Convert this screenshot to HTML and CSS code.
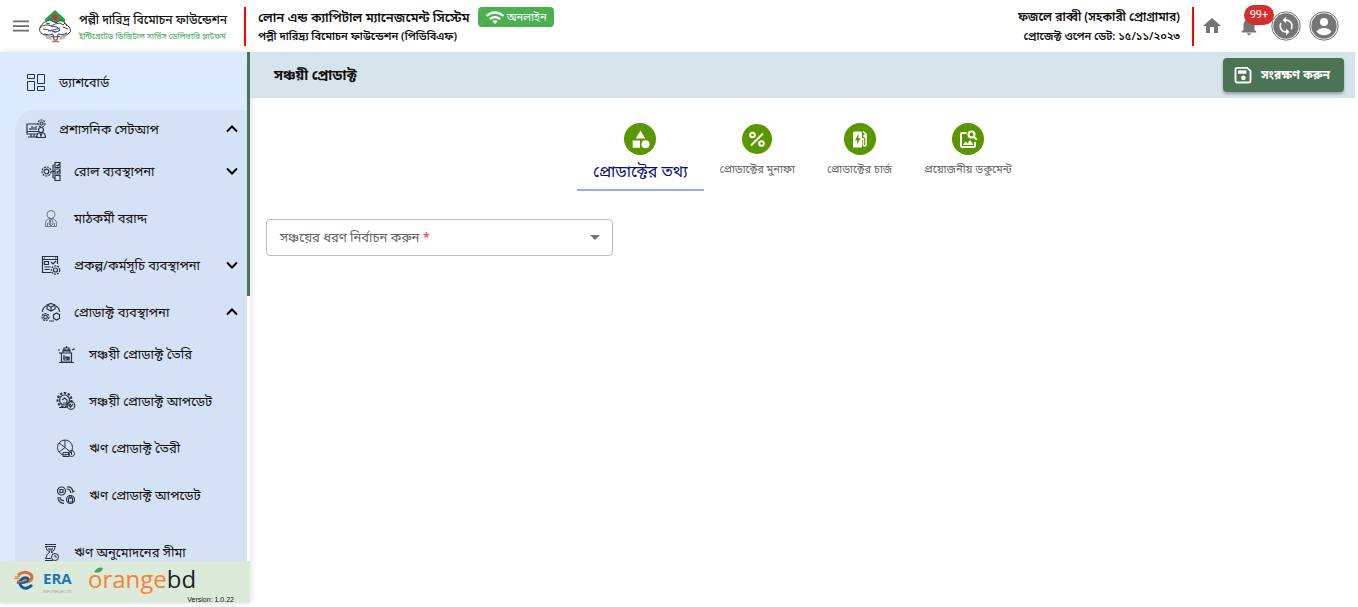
FILE: index.html
```html
<!DOCTYPE html>
<html lang="bn">
<head>
<meta charset="utf-8">
<meta name="viewport" content="width=device-width, initial-scale=1">
<title>সঞ্চয়ী প্রোডাক্ট</title>
<link rel="stylesheet" href="styles.css">
</head>
<body>
<header class="topbar">
  <div class="brand">
    <button class="plain" aria-label="মেনু"><svg width="24" height="24" viewBox="0 0 24 24" fill="#6b6b6b"><path d="M4 17.500h16v-1.700H4zm0-4.600h16v-1.700H4zM4 6.500v1.700h16V6.500z"/></svg></button>
    <svg class="crest" width="34" height="34" viewBox="0 0 34 34">
      <path d="M17 1 7 10v5h20v-5z" fill="#1ea24c"/>
      <circle cx="17" cy="8" r="2.800" fill="#e0262e"/>
      <path d="M9 12q3-2 5 0l4 2q4-4 8-1l6 6q2 4-2 6-5 3-13 3-8 0-13-3-4-3-2-7 3-5 7-6z" fill="#fff" stroke="#444"/>
      <g fill="none" stroke="#444">
        <path d="M2 19q5-5 11-2l6 1 3 3M13 17q5-3 9-3M22 14l3 2 2-2 2 3M5 20q5 0 8 2M25 18l5 2M8 14l4 1"/>
        <path d="M6 25q6 2 9 0l1 6h3l1-6q4 2 9-1"/>
      </g>
      <path d="M6 26q4 1 7 1l1 4-5-1zM29 26q-4 1-7 1l-1 4 5-1z" fill="#bbb"/>
      <path d="M10 22q6-1 12-3M13 21q4 4 9 0" stroke="#4650b8" stroke-width="1.200" fill="none"/>
      <path d="M14 32.500h7" stroke="#ef5a5a" stroke-width="1.500"/>
    </svg>
    <div class="brand-text">
      <strong class="brand-name">পল্লী দারিদ্র বিমোচন ফাউন্ডেশন</strong>
      <span class="brand-sub">ইন্টিগ্রেটেড ডিজিটাল সার্ভিস ডেলিভারি প্লাটফর্ম</span>
    </div>
  </div>
  <div class="system">
    <div class="system-row"><h1 class="system-name">লোন এন্ড ক্যাপিটাল ম্যানেজমেন্ট সিস্টেম</h1>
      <span class="online"><svg width="20" height="15" viewBox="0 0 20 15" fill="none" stroke="#fff" stroke-width="2.200"><path d="M1.500 6q8.500-7 17 0M4.800 9.200q5.200-4.200 10.400 0"/><path d="m10 14-2.500-2.800q2.500-1.900 5 0z" fill="#fff" stroke="none"/></svg>অনলাইন</span></div>
    <p class="org">পল্লী দারিদ্র্য বিমোচন ফাউন্ডেশন (পিডিবিএফ)</p>
  </div>
  <div class="user">
    <strong class="user-name">ফজলে রাব্বী (সহকারী প্রোগ্রামার)</strong>
    <span class="org">প্রোজেক্ট ওপেন ডেট: ১৫/১১/২০২৩</span>
  </div>
  <div class="tools">
    <button class="plain" aria-label="হোম"><svg width="20" height="22" viewBox="0 0 20 22" fill="#757575"><path d="M8 18v-6h4v6h4v-7h3l-9-8-9 8h3v7z"/></svg></button>
    <button class="plain bell" aria-label="নোটিফিকেশন"><svg width="22" height="22" viewBox="0 0 24 24" fill="#757575"><path d="M12 22c1.100 0 2-.900 2-2h-4c0 1.100.900 2 2 2zm6-6v-5c0-3.070-1.630-5.640-4.500-6.320V4c0-.830-.670-1.500-1.500-1.500s-1.500.670-1.500 1.500v.680C7.640 5.360 6 7.920 6 11v5l-2 2v1h16v-1z"/></svg><span class="count">99+</span></button>
    <button class="plain ring" aria-label="সিঙ্ক"><svg width="30" height="30" viewBox="0 0 30 30"><circle cx="15" cy="15" r="14.200" fill="#fff" stroke="#757575"/><circle cx="15" cy="15" r="12.700" fill="#757575"/><g transform="translate(5 5) scale(.84)" fill="#fff"><path d="M12 4V1L8 5l4 4V6c3.310 0 6 2.690 6 6 0 1.010-.250 1.970-.700 2.800l1.460 1.460C19.540 15.030 20 13.570 20 12c0-4.420-3.580-8-8-8zm0 14c-3.310 0-6-2.690-6-6 0-1.010.250-1.970.700-2.800L5.240 7.740C4.460 8.970 4 10.430 4 12c0 4.420 3.580 8 8 8v3l4-4-4-4z"/></g></svg></button>
    <button class="plain" aria-label="প্রোফাইল"><svg width="30" height="30" viewBox="0 0 30 30"><circle cx="15" cy="15" r="14.200" fill="#fff" stroke="#757575"/><circle cx="15" cy="15" r="12.700" fill="#757575"/><circle cx="15" cy="11" r="4" fill="#fff"/><path d="M7.500 20.500q2.500-3.500 7.500-3.500t7.500 3.500q-2.500 3.700-7.500 3.700t-7.500-3.700z" fill="#fff"/></svg></button>
  </div>
</header>
<div class="shell">
  <aside class="sidebar">
    <div class="scroll">
      <nav class="menu">
        <a class="item" href="#"><svg class="ico" viewBox="0 0 20 20"><path d="M1.500 2.500h7v4h-7zM1.500 9.500h7v9h-7zM11.500 2.500h7v9h-7zM11.500 14.500h7v4h-7z"/></svg>ড্যাশবোর্ড</a>
        <div class="group">
          <button class="item"><svg class="ico dense" viewBox="0 0 20 20"><path d="M12 5H1v10h11M1 12.500h11M5 15v3M8 15v3M2 18h10M4 11V9M6 11V7M8 11V8M10 11V7"/><circle cx="15.500" cy="4.500" r="3.500" stroke-dasharray="2 1"/><circle cx="15.500" cy="4.500" r="1.500"/><circle cx="15" cy="11" r="2.500"/><path d="M10.500 18.500q0-5 4.500-5t4.500 5zM14 14l1 3 1-3"/></svg>প্রশাসনিক সেটআপ<svg class="caret" viewBox="0 0 12 8"><path d="m1 6.500 5-5 5 5"/></svg></button>
          <div class="sub">
            <button class="item"><svg class="ico dense" viewBox="0 0 20 20"><circle cx="5.500" cy="10.500" r="4.500" stroke-dasharray="2 1"/><circle cx="5.500" cy="10.500" r="2.300"/><path d="M10 10.500h4M12 4v13M12 4h2M12 17h2M14 1.500h5v5h-5zM14 8h5v5h-5zM14 14.500h5v5h-5zM15.500 4l1 1 2-2M15.500 10.500l1 1 2-2"/></svg>রোল ব্যবস্থাপনা<svg class="caret" viewBox="0 0 12 8"><path d="m1 1.500 5 5 5-5"/></svg></button>
            <a class="item" href="#"><svg class="ico soft" viewBox="0 0 20 20"><circle cx="10" cy="6.500" r="4"/><path d="M4.500 18.500q-1-7 4-8h3q5 1 4 8zM9 11h2l1 5-2 2-2-2zM6.500 15v3M13.500 15v3M9.500 12v5"/></svg>মাঠকর্মী বরাদ্দ</a>
            <button class="item"><svg class="ico dense" viewBox="0 0 20 20"><path d="M10 17.500H1.500v-16h15V9M1.500 4.500h15M3.500 6.500h4v3h-4zM10 7l2 2 3-3M3.500 12h6M3.500 14.500h5M3 3h1M14 3h1"/><circle cx="14.500" cy="15" r="4.200" stroke-dasharray="2 1"/><circle cx="14.500" cy="15" r="2"/></svg>প্রকল্প/কর্মসূচি ব্যবস্থাপনা<svg class="caret" viewBox="0 0 12 8"><path d="m1 1.500 5 5 5-5"/></svg></button>
            <button class="item"><svg class="ico dense" viewBox="0 0 20 20"><path d="m10 1.500 4 1.500v4l-4 2-4-2V3zM6 3l4 2 4-2M10 5v4M5 4Q1.500 6 1.500 10M15 4q3.500 2 3.500 6M8 19h5"/><circle cx="4.500" cy="15" r="3.500" stroke-dasharray="2 1"/><circle cx="4.500" cy="15" r="1.800"/><path d="m15.500 11 3 1.700v3.600l-3 1.700-3-1.700v-3.600z"/></svg>প্রোডাক্ট ব্যবস্থাপনা<svg class="caret" viewBox="0 0 12 8"><path d="m1 6.500 5-5 5 5"/></svg></button>
            <div class="sub nested">
              <a class="item" href="#"><svg class="ico dense" viewBox="0 0 20 20"><path d="M5.500 9h10v9h-10zM7 9V6h7v3M8 6V4h5v2M10.500 2v2M3 18.500h15M2 6h2M17 5h2M4 8v2M16 6l2-1M8 11v5h5v-3h-3l2 3M7 14h7M7 7h7"/></svg>সঞ্চয়ী প্রোডাক্ট তৈরি</a>
              <a class="item" href="#"><svg class="ico dense" viewBox="0 0 20 20"><circle cx="8.500" cy="9" r="7" stroke-dasharray="2.500 1.500" stroke-width="2"/><circle cx="8.500" cy="9" r="5"/><path d="m6 9 2.500-2L11 9v3H7M3 16.500h7"/><circle cx="15" cy="14.500" r="3.800"/><path d="m13 14.500 1.500 1.500 2.500-3"/></svg>সঞ্চয়ী প্রোডাক্ট আপডেট</a>
              <a class="item" href="#"><svg class="ico" viewBox="0 0 20 20"><circle cx="9" cy="9.500" r="7.500"/><path d="M9 2v7.500L3 14M9 9.500 3 5M9 9.500l6 5M7 14.500h6v4H7zM9 16.500h2"/><circle cx="15.500" cy="15.500" r="3"/><path d="M15.500 14v3"/></svg>ঋণ প্রোডাক্ট তৈরী</a>
              <a class="item" href="#"><svg class="ico dense" viewBox="0 0 20 20"><circle cx="5.500" cy="6" r="4"/><path d="M4 4.500h3v3H4zM11 2q5-1 6 5l1.500-1M11 4q3 0 4 4M2 12q0 6 6 6.500M4 12q0 3 4 4"/><circle cx="14.500" cy="14.500" r="4"/><path d="M12.500 13h4v4h-4zM13 11l1.500 2 1.500-2"/></svg>ঋণ প্রোডাক্ট আপডেট</a>
            </div>
            <a class="item" href="#"><svg class="ico" viewBox="0 0 20 20"><path d="M4 2.500h11M4 4.500h11M5 5q0 4 4 5-4 2-4 6M14 5q0 4-4 5l2 1M4 16.500h6M4 18.500h8M7 7h5M8 8h3"/><circle cx="14" cy="15" r="3.500"/><path d="M14 13v2h2"/></svg>ঋণ অনুমোদনের সীমা</a>
          </div>
        </div>
      </nav>
      <div class="track"><div class="thumb"></div></div>
    </div>
    <footer class="vendors">
      <svg class="era-mark" width="22" height="22" viewBox="0 0 22 22" fill="none"><path d="M4 6q6-4 10-2 4 1 4 5-1 3-5 4" stroke="#e9693b" stroke-width="3"/><path d="M3 13q10 2 11-3-1-2-4-1-5 2-4 6 2 5 7 4 3-1 5-3" stroke="#165b9c" stroke-width="3"/><path d="M3 12.500q7 1 10-2" stroke="#e9693b" stroke-width="1.600"/><path d="M1 7.500h5M0 9.500h5" stroke="#ef8d55" stroke-width="1.300"/></svg>
      <div class="era"><b>ERA</b><small>INFOTECH LTD</small></div>
      <div class="orange"><span>orange</span>bd<svg class="leaf" width="11" height="7" viewBox="0 0 11 7"><path d="M1 5Q5-1 10 1 8 7 1 5z" fill="#43a35b"/></svg></div>
      <span class="version">Version: 1.0.22</span>
    </footer>
  </aside>
  <main class="main">
    <div class="titlebar">
      <h2 class="title">সঞ্চয়ী প্রোডাক্ট</h2>
      <button class="save"><svg width="20" height="20" viewBox="0 0 24 24" fill="none" stroke="#fff" stroke-width="2.200"><path d="M5 3.500h12L21 7v12q0 2-2 2H5q-2 0-2-2V5.500q0-2 2-2z"/><path d="M6 8.500h10" stroke-width="4"/><circle cx="12.500" cy="15.500" r="2.800" fill="#fff" stroke="none"/></svg>সংরক্ষণ করুন</button>
    </div>
    <div class="tabs" role="tablist">
      <button class="tab active" role="tab" aria-selected="true"><svg width="32" height="32" viewBox="0 0 32 32"><circle cx="16" cy="16" r="16" fill="#5a9600"/><g fill="#fff"><path d="m16.500 7.500 4.800 8h-9.600zM8.700 17.500h7.300v7.300H8.700z"/><circle cx="21.500" cy="21.200" r="4"/></g></svg>প্রোডাক্টের তথ্য</button>
      <button class="tab" role="tab"><svg width="32" height="32" viewBox="0 0 32 32"><circle cx="16" cy="16" r="15" fill="#5a9600"/><g fill="none" stroke="#fff" stroke-width="2"><circle cx="11.500" cy="12" r="2.300"/><circle cx="20.500" cy="20.500" r="2.300"/><path d="m10 22.500 12-12"/></g></svg>প্রোডাক্টের মুনাফা</button>
      <button class="tab" role="tab"><svg width="32" height="32" viewBox="0 0 32 32"><circle cx="16" cy="16" r="16" fill="#5a9600"/><path d="M9 10q0-1.500 1.500-1.500h6Q18 8.500 18 10v14.500H9z" fill="#fff"/><path d="M14.500 11 11 17.500h2.200v4l3.300-6.500h-2z" fill="#5a9600"/><path d="m19 8.500 3 2.500v10.500q0 1.500-1.300 1.500t-1.300-1.500V16H18" fill="none" stroke="#fff" stroke-width="1.500"/><circle cx="21" cy="13" r="1.800" fill="#fff"/></svg>প্রোডাক্টের চার্জ</button>
      <button class="tab" role="tab"><svg width="32" height="32" viewBox="0 0 32 32"><circle cx="16" cy="16" r="16" fill="#5a9600"/><path d="M14.500 10H10q-1 0-1 1v12q0 1 1 1h12q1 0 1-1v-4" fill="none" stroke="#fff" stroke-width="2"/><path d="m11 22 2.500-3.500 2 2 2.500-3.500 3.500 5z" fill="#fff"/><g fill="none" stroke="#fff" stroke-width="2"><circle cx="19.500" cy="11.500" r="3"/><path d="m21.800 13.800 3 3"/></g></svg>প্রয়োজনীয় ডকুমেন্ট</button>
    </div>
    <form class="form">
      <div class="field">
        <label class="label" for="type">সঞ্চয়ের ধরণ নির্বাচন করুন <span class="req">*</span></label>
        <select class="select" id="type"><option value=""></option></select>
        <svg class="drop" width="10" height="5" viewBox="0 0 10 5"><path d="M0 0h10L5 5z" fill="#757575"/></svg>
      </div>
    </form>
  </main>
</div>
</body>
</html>
```
FILE: styles.css
```css
* { box-sizing: border-box; }
body { margin: 0; padding: 0 3px 4px 0; height: 100vh; display: flex; flex-direction: column; background: #fff; color: #111; font-family: "Noto Sans", "Noto Sans Bengali", sans-serif; font-size: 13px; line-height: 20px; overflow: hidden; }
h1, h2, p { margin: 0; }
button { font: inherit; color: inherit; background: none; border: 0; padding: 0; cursor: pointer; }
a { color: inherit; text-decoration: none; }
svg { display: block; flex: none; }

.topbar { flex: none; height: 52px; display: flex; align-items: center; white-space: nowrap; }
.brand { width: 246px; height: 39px; display: flex; align-items: center; padding-left: 9px; border-right: 2px solid #f00; }
.crest { margin: 0 7px 0 5px; }
.brand-text { display: flex; flex-direction: column; }
.brand-name { font-size: 12px; line-height: 18px; font-weight: 500; }
.brand-sub { font-size: 8px; line-height: 13px; color: #3aa655; }
.system { padding-left: 12px; flex: 1; }
.system-row { display: flex; align-items: center; gap: 8px; height: 20px; }
.system-name { font-size: 13px; line-height: 20px; font-weight: 600; }
.online { display: flex; align-items: center; gap: 2px; height: 20px; padding: 0 7px; border-radius: 4px; background: #4caf50; color: #fff; font-size: 11px; }
.org { font-size: 11px; line-height: 18px; font-weight: 600; }
.user { display: flex; flex-direction: column; align-items: flex-end; padding-right: 12px; }
.user-name { font-size: 12px; line-height: 20px; font-weight: 600; }
.tools { height: 39px; display: flex; align-items: center; border-left: 2px solid #f00; padding: 0 16px 0 8px; }
.bell { position: relative; margin: 0 11px 0 16px; }
.count { position: absolute; left: 6px; top: -10px; min-width: 30px; height: 20px; border-radius: 10px; background: #d32f2f; color: #fff; font: 11px/20px Roboto, sans-serif; text-align: center; z-index: 1; }
.ring { margin-right: 8px; }

.shell { flex: 1; min-height: 0; display: flex; }
.sidebar { width: 250px; flex: none; display: flex; flex-direction: column; box-shadow: 1px 0 6px rgba(0, 0, 0, .12); }
.scroll { flex: 1; min-height: 0; display: flex; overflow: hidden; background: #dbeafe; }
.menu { flex: 1; padding: 11px 0 0 15px; display: flex; flex-direction: column; gap: 10px; }
.track { width: 3px; background: #fff; }
.thumb { height: 48%; background: #4a7453; }
.item { display: flex; align-items: center; gap: 13px; width: 100%; height: 37px; padding: 0 9px 0 11px; text-align: left; white-space: nowrap; flex: none; }
.ico { width: 20px; height: 20px; fill: none; stroke: #263442; stroke-width: 1; }
.dense { stroke-width: 1.2; }
.soft { stroke: #6d7885; }
.caret { width: 12px; height: 8px; margin-left: auto; fill: none; stroke: #000; stroke-width: 2; }
.group { background: #d5e2f5; border-radius: 20px 0 0 0; min-height: 500px; }
.sub { margin-top: 5px; display: flex; flex-direction: column; gap: 10px; }
.sub .item { padding-left: 26px; }
.nested { margin-top: -5px; padding-bottom: 10px; }
.nested .item { padding-left: 41px; }
.vendors { position: relative; flex: none; height: 42px; display: flex; align-items: flex-start; padding: 8px 0 0 14px; background: #dcebd9; font-family: "Open Sans", sans-serif; }
.era-mark { margin-right: 7px; }
.era { display: flex; flex-direction: column; width: 34px; margin-right: 11px; color: #1b75bb; }
.era b { font-size: 15px; line-height: 18px; }
.era small { padding-top: 2px; font: 4px/6px "Liberation Sans", sans-serif; color: #8ca09b; }
.orange { position: relative; font-size: 24px; line-height: 20px; color: #222; }
.orange span { color: #f58235; }
.leaf { position: absolute; left: 5px; top: -2px; }
.version { position: absolute; right: 16px; bottom: -1px; font: 7px/8px "Liberation Sans", sans-serif; color: #111; }

.main { flex: 1; min-width: 0; }
.titlebar { height: 46px; display: flex; align-items: center; justify-content: space-between; padding: 0 11px 0 24px; background: #d6e4eb; }
.title { font-size: 14px; line-height: 24px; }
.save { height: 34px; display: flex; align-items: center; gap: 8px; padding: 0 14px 0 10px; border-radius: 4px; background: #4a7453; color: #fff; font-weight: 700; font-size: 12px; box-shadow: 0 2px 3px rgba(0, 0, 0, .3); }
.tabs { display: flex; justify-content: center; align-items: flex-start; padding-top: 25px; height: 93px; }
.tab { display: flex; flex-direction: column; align-items: center; gap: 4px; padding: 0 16px; font-size: 11px; line-height: 20px; color: #666; white-space: nowrap; }
.active { height: 68px; font-size: 16px; line-height: 28px; gap: 2px; color: #0a1172; border-bottom: 2px solid #97acf9; }
.form { padding: 28px 16px; }
.field { position: relative; width: 347px; max-width: 100%; height: 37px; }
.label { position: absolute; left: 14px; top: 8px; color: #666; pointer-events: none; }
.req { color: #f33; }
.select { width: 100%; height: 100%; appearance: none; background: #fff; border: 1px solid #bdbdbd; border-radius: 4px; font: inherit; }
.drop { position: absolute; right: 13px; top: 16px; pointer-events: none; }
```
